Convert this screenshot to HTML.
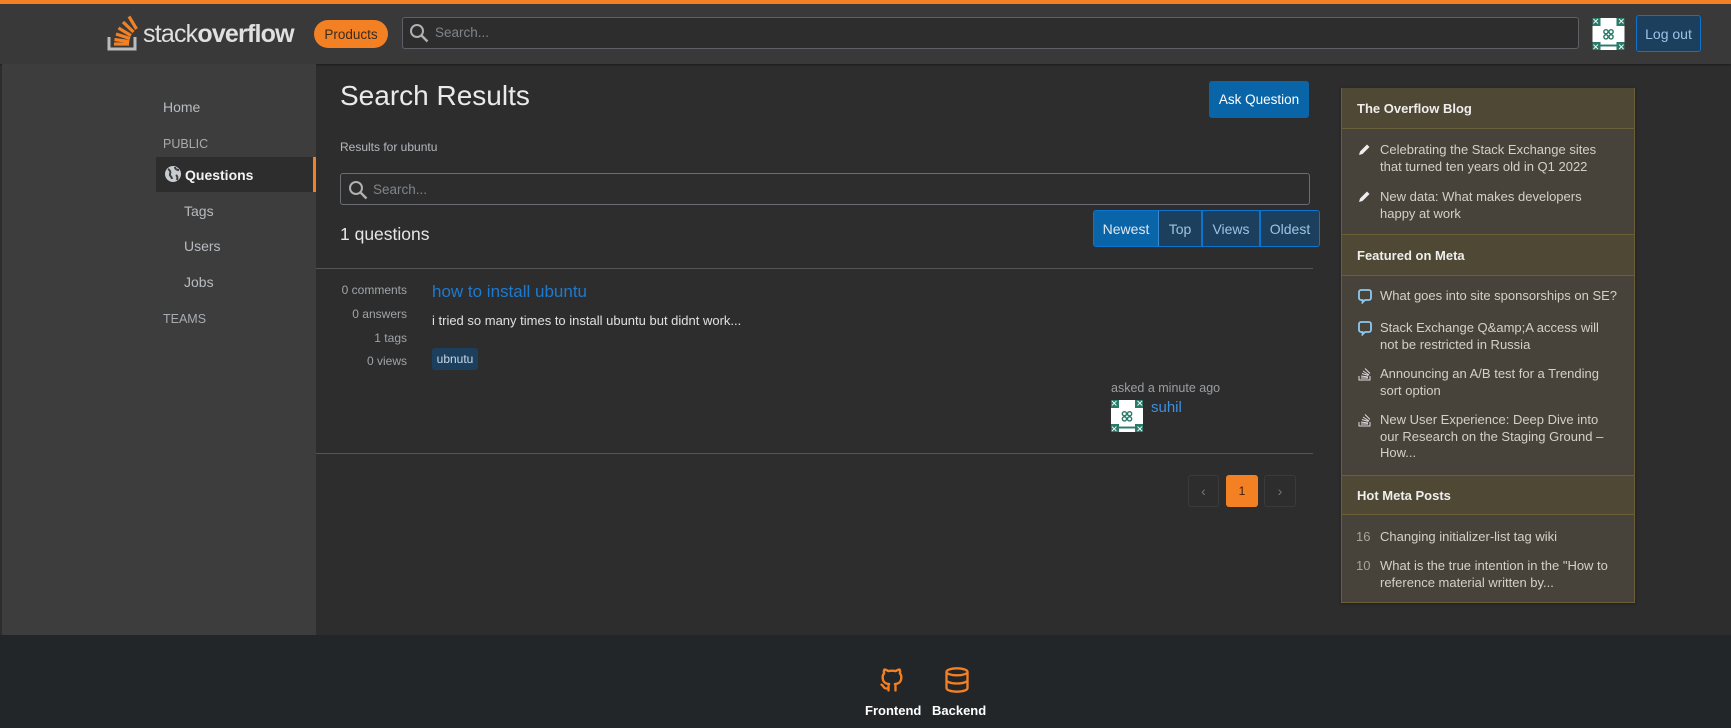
<!DOCTYPE html>
<html><head><meta charset="utf-8"><style>
*{box-sizing:border-box;margin:0;padding:0}
body{width:1731px;height:728px;overflow:hidden;background:#2d2d2d;font-family:"Liberation Sans",sans-serif;position:relative;color:#ccc}
.a{position:absolute}
.hdr{left:0;top:0;width:1731px;height:64px;background:#393939;border-top:4px solid #f48024;box-shadow:0 1px 2px rgba(0,0,0,.4)}
.side{left:2px;top:64px;width:314px;height:571px;background:#3d3d3d}
.foot{left:0;top:635px;width:1731px;height:93px;background:#232629}
.nav{color:#b8bcc0;font-size:14px}
.panel{left:1341px;top:88px;width:294px;height:515px;background:#47423a;border:1px solid #6b5f3a;box-shadow:0 1px 3px rgba(0,0,0,.3)}
.ph{position:absolute;left:0;width:292px;background:#4f4834;border-top:1px solid #6b5f3a;border-bottom:1px solid #6b5f3a;color:#eee;font-weight:bold;font-size:13px;padding-left:15px;display:flex;align-items:center}
.pi{position:absolute;left:38px;width:238px;font-size:13px;line-height:16.5px;color:#d4d0c8}
.ic{position:absolute;left:-22px;top:1px}
.btn{position:absolute;display:flex;align-items:center;justify-content:center;font-size:14px}
.stat{position:absolute;right:1324px;font-size:12px;color:#a0a4a8;text-align:right}
</style></head><body>
<div class="a hdr"></div>
<svg class="a" style="left:107px;top:13px" width="36" height="38" viewBox="0 0 36 38">
<path d="M2 24v12h26V24" fill="none" stroke="#bcbbbb" stroke-width="3"/>
<g stroke="#f48024" stroke-width="3.2"><path d="M7 31h15"/><path d="M7.5 26.5l14.8 2"/><path d="M9 21l14 4.5"/><path d="M11.5 15l12.5 7.5"/><path d="M16 9l10.5 10"/><path d="M22 3.5l7.5 12.5"/></g>
</svg>
<div class="a" style="left:143px;top:20px;font-size:25px;color:#e0e0e0;letter-spacing:-0.8px">stack<b>overflow</b></div>
<div class="a btn" style="left:314px;top:20px;width:74px;height:28px;border-radius:14px;background:#f48024;color:#3b2b1d;font-size:13.5px">Products</div>
<div class="a" style="left:402px;top:17px;width:1177px;height:32px;border:1px solid #5d6166;border-radius:3px;background:#2d2d2d"></div>
<svg class="a" style="left:409px;top:23px" width="20" height="20" viewBox="0 0 20 20"><circle cx="8" cy="8" r="6" fill="none" stroke="#b0b0b0" stroke-width="2"/><path d="M12.5 12.5l6 6" stroke="#b0b0b0" stroke-width="2.4"/></svg>
<div class="a" style="left:435px;top:25px;font-size:13.5px;color:#7f858a">Search...</div>
<svg class="a" style="left:1592px;top:18px" width="33" height="32" viewBox="0 0 10 10"><rect width="10" height="10" fill="#2a7a6a"/><path d="M2.5 0h5v2.5H10v5H7.5V10h-5V7.5H0v-5h2.5z" fill="#fff"/><path d="M2.5 8.6h5" stroke="#2a7a6a" stroke-width=".6"/><g fill="none" stroke="#2a7a6a" stroke-width=".45"><circle cx="4.2" cy="4.3" r=".65"/><circle cx="5.8" cy="4.3" r=".65"/><circle cx="4.2" cy="5.9" r=".65"/><circle cx="5.8" cy="5.9" r=".65"/></g><g stroke="#fff" stroke-width=".3"><path d="M.3 .3l1.4 1.4M1.7 .3L.3 1.7M8.3 .3l1.4 1.4M9.7 .3L8.3 1.7M.3 8.3l1.4 1.4M1.7 8.3L.3 9.7M8.3 8.3l1.4 1.4M9.7 8.3L8.3 9.7"/></g></svg>
<div class="a btn" style="left:1636px;top:15px;width:65px;height:37px;border:1px solid #0a74d0;border-radius:3px;background:#1d3f5e;color:#9cc3e6">Log out</div>

<div class="a side"></div>
<div class="a nav" style="left:163px;top:99px">Home</div>
<div class="a nav" style="left:163px;top:137px;font-size:12.5px;color:#a8acb0">PUBLIC</div>
<div class="a" style="left:156px;top:157px;width:160px;height:35px;background:#2d2d2d;border-right:3px solid #f48024"></div>
<svg class="a" style="left:164px;top:165px" width="18" height="18" viewBox="0 0 18 18"><circle cx="9" cy="9" r="8" fill="#c8ccd0"/><path d="M4 4c2 1 3 3 2 5s2 2 2 5M11 2c0 2 2 3 4 3M12 10c1 1 2 2 1 5" stroke="#3d3d3d" stroke-width="2" fill="none"/></svg>
<div class="a" style="left:185px;top:167px;font-size:14px;font-weight:bold;color:#f2f2f2">Questions</div>
<div class="a nav" style="left:184px;top:203px">Tags</div>
<div class="a nav" style="left:184px;top:238px">Users</div>
<div class="a nav" style="left:184px;top:274px">Jobs</div>
<div class="a nav" style="left:163px;top:312px;font-size:12.5px;color:#a8acb0">TEAMS</div>

<div class="a" style="left:340px;top:80px;font-size:28px;color:#eaeaea">Search Results</div>
<div class="a btn" style="left:1209px;top:81px;width:100px;height:37px;background:#0a65a8;border-radius:3px;color:#fff;font-size:13.5px">Ask Question</div>
<div class="a" style="left:340px;top:140px;font-size:12px;color:#b5b9bd">Results for ubuntu</div>
<div class="a" style="left:340px;top:173px;width:970px;height:32px;border:1px solid #6a6e72;border-radius:3px"></div>
<svg class="a" style="left:348px;top:180px" width="20" height="20" viewBox="0 0 20 20"><circle cx="8" cy="8" r="6" fill="none" stroke="#b0b0b0" stroke-width="2"/><path d="M12.5 12.5l6 6" stroke="#b0b0b0" stroke-width="2.4"/></svg>
<div class="a" style="left:373px;top:182px;font-size:13.5px;color:#7f858a">Search...</div>
<div class="a" style="left:340px;top:224px;font-size:17.5px;color:#e6e6e6">1 questions</div>
<div class="a" style="left:1093px;top:210px;width:227px;height:37px;border:1px solid #0a74d0;border-radius:3px;background:#1d3f5e;overflow:hidden">
<div class="btn" style="left:0;top:0;width:65px;height:35px;background:#0a65a8;color:#e0e8f0;border-right:1px solid #3a8ad0">Newest</div>
<div class="btn" style="left:65px;top:0;width:44px;height:35px;color:#9cc3e6;border-right:2px solid #0a74d0">Top</div>
<div class="btn" style="left:109px;top:0;width:58px;height:35px;color:#9cc3e6;border-right:2px solid #0a74d0">Views</div>
<div class="btn" style="left:167px;top:0;width:58px;height:35px;color:#9cc3e6">Oldest</div>
</div>
<div class="a" style="left:316px;top:268px;width:997px;height:1px;background:#555"></div>
<div class="stat" style="top:283px">0 comments</div>
<div class="stat" style="top:307px">0 answers</div>
<div class="stat" style="top:331px">1 tags</div>
<div class="stat" style="top:354px">0 views</div>
<div class="a" style="left:432px;top:282px;font-size:17px;color:#1e7ad0">how to install ubuntu</div>
<div class="a" style="left:432px;top:313px;font-size:13px;color:#e0e0e0">i tried so many times to install ubuntu but didnt work...</div>
<div class="a btn" style="left:432px;top:348px;width:46px;height:22px;background:#1d3f5e;border-radius:3px;color:#c8d8e8;font-size:12px">ubnutu</div>
<div class="a" style="left:1111px;top:381px;font-size:12.5px;color:#9a9ea2">asked a minute ago</div>
<svg class="a" style="left:1111px;top:400px" width="32" height="32" viewBox="0 0 10 10"><rect width="10" height="10" fill="#2a7a6a"/><path d="M2.5 0h5v2.5H10v5H7.5V10h-5V7.5H0v-5h2.5z" fill="#fff"/><path d="M2.5 8.6h5" stroke="#2a7a6a" stroke-width=".6"/><g fill="none" stroke="#2a7a6a" stroke-width=".45"><circle cx="4.2" cy="4.3" r=".65"/><circle cx="5.8" cy="4.3" r=".65"/><circle cx="4.2" cy="5.9" r=".65"/><circle cx="5.8" cy="5.9" r=".65"/></g><g stroke="#fff" stroke-width=".3"><path d="M.3 .3l1.4 1.4M1.7 .3L.3 1.7M8.3 .3l1.4 1.4M9.7 .3L8.3 1.7M.3 8.3l1.4 1.4M1.7 8.3L.3 9.7M8.3 8.3l1.4 1.4M9.7 8.3L8.3 9.7"/></g></svg>
<div class="a" style="left:1151px;top:399px;font-size:15px;color:#3c90e0">suhil</div>
<div class="a" style="left:316px;top:453px;width:997px;height:1px;background:#555"></div>
<div class="a btn" style="left:1188px;top:475px;width:31px;height:32px;border:1px solid #3a3a3a;border-radius:3px;color:#777">‹</div>
<div class="a btn" style="left:1226px;top:475px;width:32px;height:32px;background:#f48024;border-radius:3px;color:#3b1d0d;font-size:12px">1</div>
<div class="a btn" style="left:1264px;top:475px;width:32px;height:32px;border:1px solid #3a3a3a;border-radius:3px;color:#777">›</div>

<div class="a panel">
<div class="ph" style="top:-1px;height:41px;border-top:none">The Overflow Blog</div>
<div class="pi" style="top:53px"><svg class="ic" width="13" height="13" viewBox="0 0 13 13"><path d="M1 12l1-3.5 7-7 2.5 2.5-7 7z" fill="#eee"/></svg>Celebrating the Stack Exchange sites that turned ten years old in Q1 2022</div>
<div class="pi" style="top:100px"><svg class="ic" width="13" height="13" viewBox="0 0 13 13"><path d="M1 12l1-3.5 7-7 2.5 2.5-7 7z" fill="#eee"/></svg>New data: What makes developers happy at work</div>
<div class="ph" style="top:145px;height:42px">Featured on Meta</div>
<div class="pi" style="top:199px"><svg class="ic" width="14" height="15" viewBox="0 0 14 15"><path d="M3 1h8a2 2 0 012 2v6a2 2 0 01-2 2H7l-2.5 2.5V11H3a2 2 0 01-2-2V3a2 2 0 012-2z" fill="none" stroke="#8ec8f0" stroke-width="1.8"/></svg>What goes into site sponsorships on SE?</div>
<div class="pi" style="top:231px"><svg class="ic" width="14" height="15" viewBox="0 0 14 15"><path d="M3 1h8a2 2 0 012 2v6a2 2 0 01-2 2H7l-2.5 2.5V11H3a2 2 0 01-2-2V3a2 2 0 012-2z" fill="none" stroke="#8ec8f0" stroke-width="1.8"/></svg>Stack Exchange Q&amp;amp;A access will not be restricted in Russia</div>
<div class="pi" style="top:277px"><svg class="ic" width="13" height="14" viewBox="0 0 13 14"><path d="M1 9v4h11V9M3 11h7M3 9l7 1M4 6.5l6.5 2M5 4l6 4M7 1.5l5 5" fill="none" stroke="#ddd" stroke-width="1"/></svg>Announcing an A/B test for a Trending sort option</div>
<div class="pi" style="top:323px"><svg class="ic" width="13" height="14" viewBox="0 0 13 14"><path d="M1 9v4h11V9M3 11h7M3 9l7 1M4 6.5l6.5 2M5 4l6 4M7 1.5l5 5" fill="none" stroke="#ddd" stroke-width="1"/></svg>New User Experience: Deep Dive into our Research on the Staging Ground – How...</div>
<div class="ph" style="top:386px;height:40px">Hot Meta Posts</div>
<div class="pi" style="top:440px"><span class="ic" style="left:-24px;top:0;color:#a8a49c">16</span>Changing initializer-list tag wiki</div>
<div class="pi" style="top:469px"><span class="ic" style="left:-24px;top:0;color:#a8a49c">10</span>What is the true intention in the "How to reference material written by...</div>
</div>

<div class="a foot"></div>
<svg class="a" style="left:878px;top:665px" width="28" height="30" viewBox="0 0 24 24" fill="none" stroke="#f48024" stroke-width="2" stroke-linecap="round" stroke-linejoin="round"><path d="M9 19c-4.3 1.4-4.3-2.5-6-3m12 5v-3.5c0-1 .1-1.4-.5-2 2.8-.3 5.5-1.4 5.5-6a4.6 4.6 0 00-1.3-3.2 4.2 4.2 0 00-.1-3.2s-1.1-.3-3.5 1.3a12.3 12.3 0 00-6.2 0C6.5 2.8 5.4 3.1 5.4 3.1a4.2 4.2 0 00-.1 3.2A4.6 4.6 0 004 9.5c0 4.6 2.7 5.7 5.5 6-.6.6-.6 1.2-.5 2V21"/></svg>
<svg class="a" style="left:943px;top:665px" width="28" height="30" viewBox="0 0 24 24" fill="none" stroke="#f48024" stroke-width="2"><ellipse cx="12" cy="5" rx="9" ry="3"/><path d="M3 5v14c0 1.7 4 3 9 3s9-1.3 9-3V5M3 12c0 1.7 4 3 9 3s9-1.3 9-3"/></svg>
<div class="a" style="left:865px;top:703px;font-size:13px;font-weight:bold;color:#fff">Frontend</div>
<div class="a" style="left:932px;top:703px;font-size:13px;font-weight:bold;color:#fff">Backend</div>
</body></html>
